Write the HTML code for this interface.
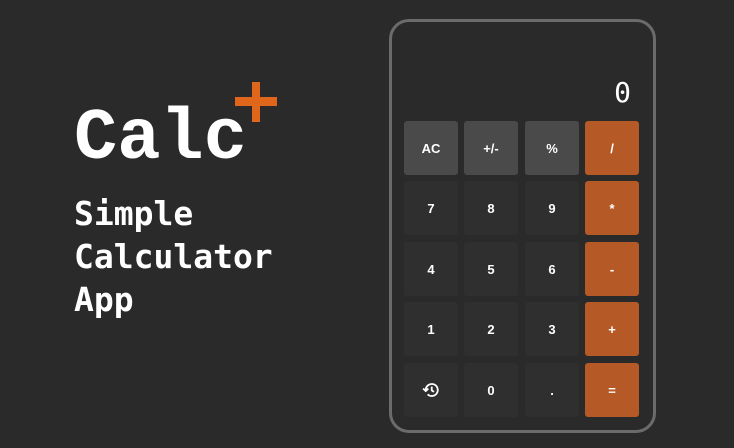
<!DOCTYPE html>
<html><head><style>
body{margin:0;width:734px;height:448px;background:#2a2a2a;overflow:hidden;position:relative;font-family:"Liberation Mono",monospace;color:#fff}
.calc{position:absolute;left:74px;top:94px;font-size:72px;font-weight:bold;line-height:90px}
.plus1{position:absolute;left:235px;top:97px;width:42px;height:9px;background:#e0661c}
.plus2{position:absolute;left:252px;top:82px;width:8px;height:40px;background:#e0661c}
.sub{position:absolute;left:74px;top:192px;font-size:33px;font-weight:bold;line-height:43px;font-family:"DejaVu Sans Mono",monospace}
.frame{position:absolute;left:389px;top:19px;width:261px;height:408px;border:3px solid #6b6b6b;border-radius:20px;box-sizing:content-box}
.disp{position:absolute;left:600px;top:76px;width:31px;text-align:right;font-size:28px;font-family:"DejaVu Sans Mono",monospace}
.b{position:absolute;width:54px;height:54px;border-radius:3px;background:#2f2f2f;display:flex;align-items:center;justify-content:center;font:bold 13px "Liberation Sans",sans-serif;color:#fff}
.g{background:#4a4a4a}.o{background:#b55a26}
</style></head><body>
<div class="calc">Calc</div><div class="plus1"></div><div class="plus2"></div>
<div class="sub">Simple<br>Calculator<br>App</div>
<div class="frame"></div>
<div class="disp">0</div>
<div class="b g" style="left:404px;top:121px">AC</div>
<div class="b g" style="left:464px;top:121px">+/-</div>
<div class="b g" style="left:525px;top:121px">%</div>
<div class="b o" style="left:585px;top:121px">/</div>
<div class="b" style="left:404px;top:181px">7</div>
<div class="b" style="left:464px;top:181px">8</div>
<div class="b" style="left:525px;top:181px">9</div>
<div class="b o" style="left:585px;top:181px">*</div>
<div class="b" style="left:404px;top:242px">4</div>
<div class="b" style="left:464px;top:242px">5</div>
<div class="b" style="left:525px;top:242px">6</div>
<div class="b o" style="left:585px;top:242px">-</div>
<div class="b" style="left:404px;top:302px">1</div>
<div class="b" style="left:464px;top:302px">2</div>
<div class="b" style="left:525px;top:302px">3</div>
<div class="b o" style="left:585px;top:302px">+</div>
<div class="b" style="left:404px;top:363px"><svg width="18" height="18" viewBox="0 0 24 24" fill="none" stroke="#fff" stroke-width="2.4"><path d="M5 12a8 8 0 1 1 2.5 5.8"/><path d="M1.5 10l3.5 3.5 3.5-3.5" stroke-linejoin="round"/><path d="M13 7.5v5l3 2"/></svg></div>
<div class="b" style="left:464px;top:363px">0</div>
<div class="b" style="left:525px;top:363px">.</div>
<div class="b o" style="left:585px;top:363px">=</div>
</body></html>
